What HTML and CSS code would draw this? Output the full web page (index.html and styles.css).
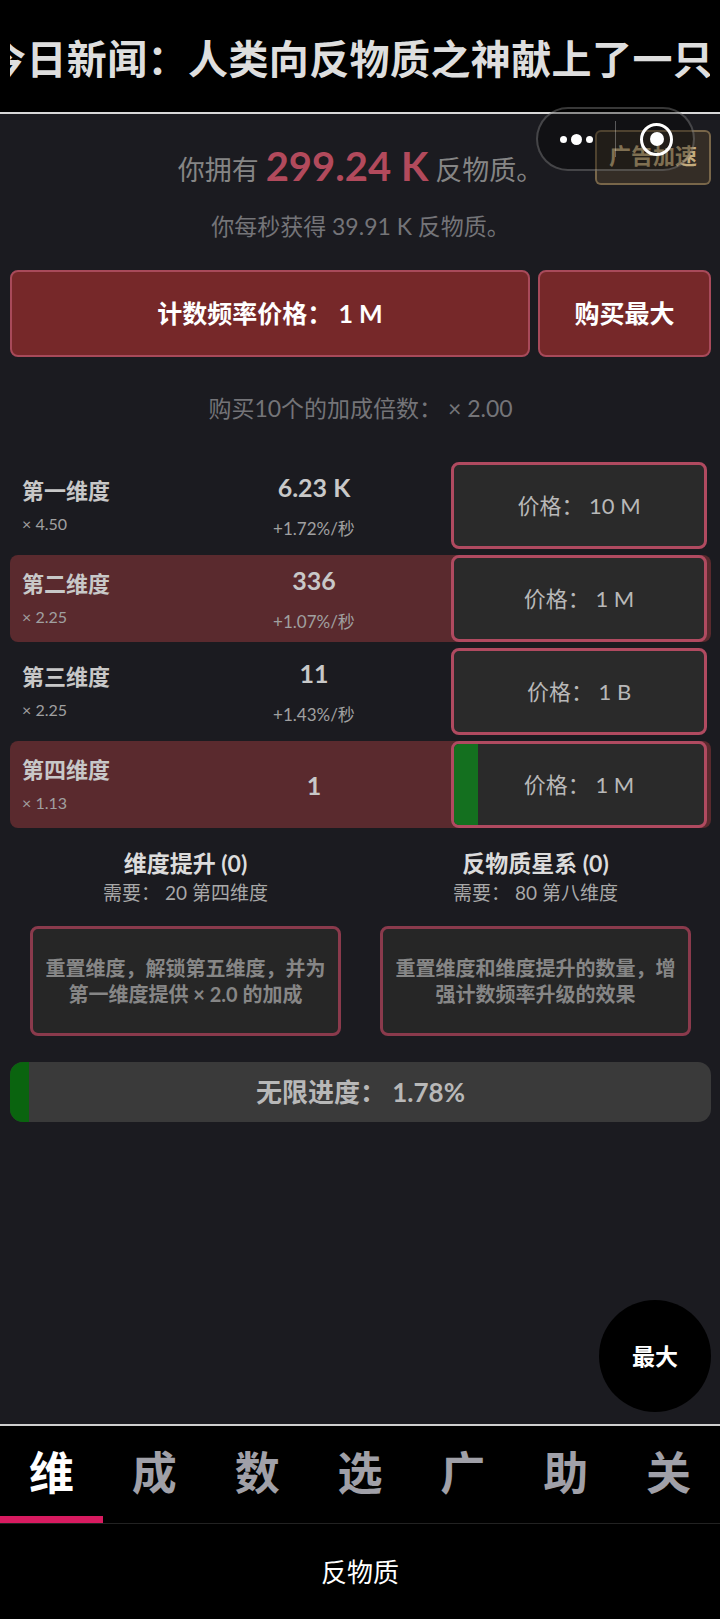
FILE: index.html
```html
<!DOCTYPE html>
<html lang="zh-CN">
<head>
    <meta charset="UTF-8">
    <meta name="viewport" content="width=device-width, initial-scale=1.0">
    <title>反物质维度</title>
    <link rel="stylesheet" href="styles.css">
</head>
<body>
    <div class="news"><div class="news-text">今日新闻：人类向反物质之神献上了一只</div></div>

    <!-- overlays in the top right corner -->
    <div class="ad-btn">广告加速</div>
    <div class="capsule">
        <div class="capsule-dots"><i></i><b></b><i></i></div>
        <div class="capsule-line"></div>
        <div class="capsule-target"><span></span></div>
    </div>

    <div class="main">
        <div class="amount">你拥有 <span class="amount-num">299.24 K</span> 反物质。</div>
        <div class="persec">你每秒获得 39.91 K 反物质。</div>

        <div class="tick-row">
            <div class="tick-btn tick-main">计数频率价格： 1 M</div>
            <div class="tick-btn tick-max">购买最大</div>
        </div>

        <div class="multi">购买10个的加成倍数： × 2.00</div>

        <div class="dims">
            <div class="dim">
                <div class="dim-name"><div class="dim-title">第一维度</div><div class="dim-mult">× 4.50</div></div>
                <div class="dim-count"><div class="dim-num">6.23 K</div><div class="dim-rate">+1.72%/秒</div></div>
                <div class="dim-buy">价格： 10 M</div>
            </div>
            <div class="dim dim-on">
                <div class="dim-name"><div class="dim-title">第二维度</div><div class="dim-mult">× 2.25</div></div>
                <div class="dim-count"><div class="dim-num">336</div><div class="dim-rate">+1.07%/秒</div></div>
                <div class="dim-buy">价格： 1 M</div>
            </div>
            <div class="dim">
                <div class="dim-name"><div class="dim-title">第三维度</div><div class="dim-mult">× 2.25</div></div>
                <div class="dim-count"><div class="dim-num">11</div><div class="dim-rate">+1.43%/秒</div></div>
                <div class="dim-buy">价格： 1 B</div>
            </div>
            <div class="dim dim-on">
                <div class="dim-name"><div class="dim-title">第四维度</div><div class="dim-mult">× 1.13</div></div>
                <div class="dim-count"><div class="dim-num">1</div></div>
                <div class="dim-buy"><div class="dim-fill" style="width:24px"></div><span class="dim-price">价格： 1 M</span></div>
            </div>
        </div>

        <div class="prestige">
            <div class="prestige-col">
                <div class="prestige-title">维度提升 (0)</div>
                <div class="prestige-need">需要： 20 第四维度</div>
                <div class="prestige-btn">重置维度，解锁第五维度，并为<br>第一维度提供 × 2.0 的加成</div>
            </div>
            <div class="prestige-col">
                <div class="prestige-title">反物质星系 (0)</div>
                <div class="prestige-need">需要： 80 第八维度</div>
                <div class="prestige-btn">重置维度和维度提升的数量，增<br>强计数频率升级的效果</div>
            </div>
        </div>

        <div class="progress">
            <div class="progress-fill" style="width:19px"></div>
            <span class="progress-text">无限进度： 1.78%</span>
        </div>
    </div>

    <div class="float-max">最大</div>

    <div class="tabs">
        <div class="tab tab-on">维</div>
        <div class="tab">成</div>
        <div class="tab">数</div>
        <div class="tab">选</div>
        <div class="tab">广</div>
        <div class="tab">助</div>
        <div class="tab">关</div>
    </div>
    <div class="subtabs">
        <div class="subtab">反物质</div>
        <div class="subtab-bar"></div>
    </div>
</body>
</html>
```

FILE: styles.css
```css
* {
    box-sizing: border-box;
}
body {
    margin: 0;
    width: 720px;
    height: 1619px;
    overflow: hidden;
    position: relative;
    display: flex;
    flex-direction: column;
    background-color: #1b1b20;
    color: #aaa;
    font-family: Lato, "Noto Sans CJK SC", sans-serif;
}

/* news ticker */
.news {
    height: 114px;
    flex: none;
    padding: 0 10px;
    background-color: #000;
    border-bottom: 2px solid #d8d8d8;
}
.news-text {
    height: 112px;
    line-height: 118px;
    overflow: hidden;
    white-space: nowrap;
    text-indent: -24px;
    font-size: 40px;
    letter-spacing: 0.4px;
    font-weight: 700;
    color: #dedede;
}

/* top right overlays */
.ad-btn {
    position: absolute;
    left: 595px;
    top: 130px;
    width: 116px;
    height: 55px;
    border: 2px solid rgba(190, 160, 110, 0.5);
    border-radius: 6px;
    background-color: rgba(140, 110, 60, 0.22);
    color: #c4ac7e;
    font-size: 22px;
    font-weight: 700;
    line-height: 47px;
    text-align: center;
    white-space: nowrap;
}
.capsule {
    position: absolute;
    left: 536px;
    top: 107px;
    width: 159px;
    height: 64px;
    border: 2px solid rgba(255, 255, 255, 0.22);
    border-radius: 32px;
    background-color: rgba(0, 0, 0, 0.35);
    display: flex;
    align-items: center;
}
.capsule-dots {
    width: 77px;
    display: flex;
    align-items: center;
    justify-content: center;
    gap: 4px;
}
.capsule-dots i {
    width: 7px;
    height: 7px;
    border-radius: 50%;
    background-color: #fff;
}
.capsule-dots b {
    width: 11px;
    height: 11px;
    border-radius: 50%;
    background-color: #fff;
}
.capsule-line {
    width: 1px;
    height: 36px;
    background-color: rgba(255, 255, 255, 0.3);
}
.capsule-target {
    width: 33px;
    height: 33px;
    margin-left: 24px;
    border: 3px solid #fff;
    border-radius: 50%;
    display: flex;
    align-items: center;
    justify-content: center;
}
.capsule-target span {
    width: 14px;
    height: 14px;
    border-radius: 50%;
    background-color: #fff;
}

/* main */
.main {
    flex: 1;
    padding: 0 9px 0 10px;
}
.amount {
    margin-top: 27px;
    height: 50px;
    line-height: 50px;
    text-align: center;
    font-size: 27px;
    color: #858585;
    white-space: nowrap;
}
.amount-num {
    font-size: 40px;
    font-weight: 700;
    color: #b24a5c;
    vertical-align: -1px;
}
.persec {
    margin-top: 18px;
    height: 34px;
    line-height: 34px;
    text-align: center;
    font-size: 23px;
    color: #747478;
}
.tick-row {
    margin-top: 27px;
    display: flex;
    gap: 8px;
}
.tick-btn {
    height: 87px;
    line-height: 83px;
    text-align: center;
    border: 2px solid #a84a5a;
    border-radius: 8px;
    background-color: #762829;
    color: #fff;
    font-size: 25px;
    font-weight: 700;
}
.tick-main {
    flex: 1;
}
.tick-max {
    width: 173px;
}
.multi {
    margin-top: 34px;
    height: 34px;
    line-height: 34px;
    text-align: center;
    font-size: 23px;
    color: #747478;
}

/* dimensions */
.dims {
    margin-top: 37px;
    display: flex;
    flex-direction: column;
    gap: 6px;
}
.dim {
    height: 87px;
    display: flex;
    align-items: center;
    padding: 0 4px 0 12px;
    border-radius: 8px;
}
.dim-on {
    background-color: #5a2a2e;
}
.dim-name {
    width: 155px;
}
.dim-title {
    font-size: 22px;
    font-weight: 700;
    line-height: 30px;
    color: #c8c8c8;
}
.dim-mult {
    margin-top: 6px;
    font-size: 16px;
    line-height: 24px;
    color: #a0a0a0;
}
.dim-count {
    width: 274px;
    text-align: center;
}
.dim-num {
    font-size: 25px;
    font-weight: 700;
    line-height: 34px;
    color: #c8c8c8;
}
.dim-rate {
    margin-top: 12px;
    font-size: 17px;
    line-height: 26px;
    color: #a0a0a0;
}
.dim-buy {
    position: relative;
    flex: none;
    width: 256px;
    height: 87px;
    line-height: 81px;
    text-align: center;
    border: 3px solid #b04a60;
    border-radius: 8px;
    background-color: #2a2a2a;
    color: #b8b8b8;
    font-size: 22px;
    overflow: hidden;
}
.dim-fill {
    position: absolute;
    left: 0;
    top: 0;
    bottom: 0;
    background-color: #14701f;
}
.dim-price {
    position: relative;
}

/* prestige */
.prestige {
    margin-top: 18px;
    display: flex;
    padding-left: 20px;
    gap: 39px;
}
.prestige-col {
    width: 311px;
    text-align: center;
}
.prestige-title {
    height: 34px;
    line-height: 34px;
    font-size: 23px;
    font-weight: 700;
    color: #dcdcdc;
}
.prestige-need {
    height: 28px;
    line-height: 26px;
    font-size: 19px;
    color: #a8a8a8;
}
.prestige-btn {
    margin-top: 18px;
    height: 110px;
    padding-top: 26px;
    border: 3px solid #8a3a4c;
    border-radius: 8px;
    background-color: #262626;
    font-size: 20px;
    font-weight: 700;
    line-height: 26px;
    color: #868686;
    white-space: nowrap;
}

/* infinity bar */
.progress {
    position: relative;
    margin-top: 26px;
    height: 60px;
    line-height: 60px;
    border-radius: 13px;
    background-color: #3a3a3a;
    overflow: hidden;
    text-align: center;
    font-size: 26px;
    font-weight: 700;
    color: #b8b8b8;
}
.progress-fill {
    position: absolute;
    left: 0;
    top: 0;
    bottom: 0;
    background-color: #0a640f;
}
.progress-text {
    position: relative;
}

/* floating buy max */
.float-max {
    position: absolute;
    left: 599px;
    top: 1300px;
    width: 112px;
    height: 112px;
    line-height: 112px;
    border-radius: 50%;
    background-color: #000;
    color: #fff;
    text-align: center;
    font-size: 23px;
    font-weight: 700;
}

/* bottom tabs */
.tabs {
    flex: none;
    height: 100px;
    display: flex;
    background-color: #000;
    border-top: 2px solid #cfcfcf;
    border-bottom: 1px solid #222;
}
.tab {
    flex: 1;
    height: 97px;
    line-height: 94px;
    text-align: center;
    font-size: 45px;
    font-weight: 700;
    color: #a0a0a8;
}
.tab-on {
    color: #fff;
    border-bottom: 7px solid #d81b60;
}
.subtabs {
    flex: none;
    height: 95px;
    display: flex;
    flex-direction: column;
    padding: 0 10px;
    background-color: #000;
}
.subtab {
    flex: 1;
    line-height: 96px;
    text-align: center;
    font-size: 26px;
    color: #fff;
}
.subtab-bar {
    height: 3px;
    background-color: #d81b60;
}
```
